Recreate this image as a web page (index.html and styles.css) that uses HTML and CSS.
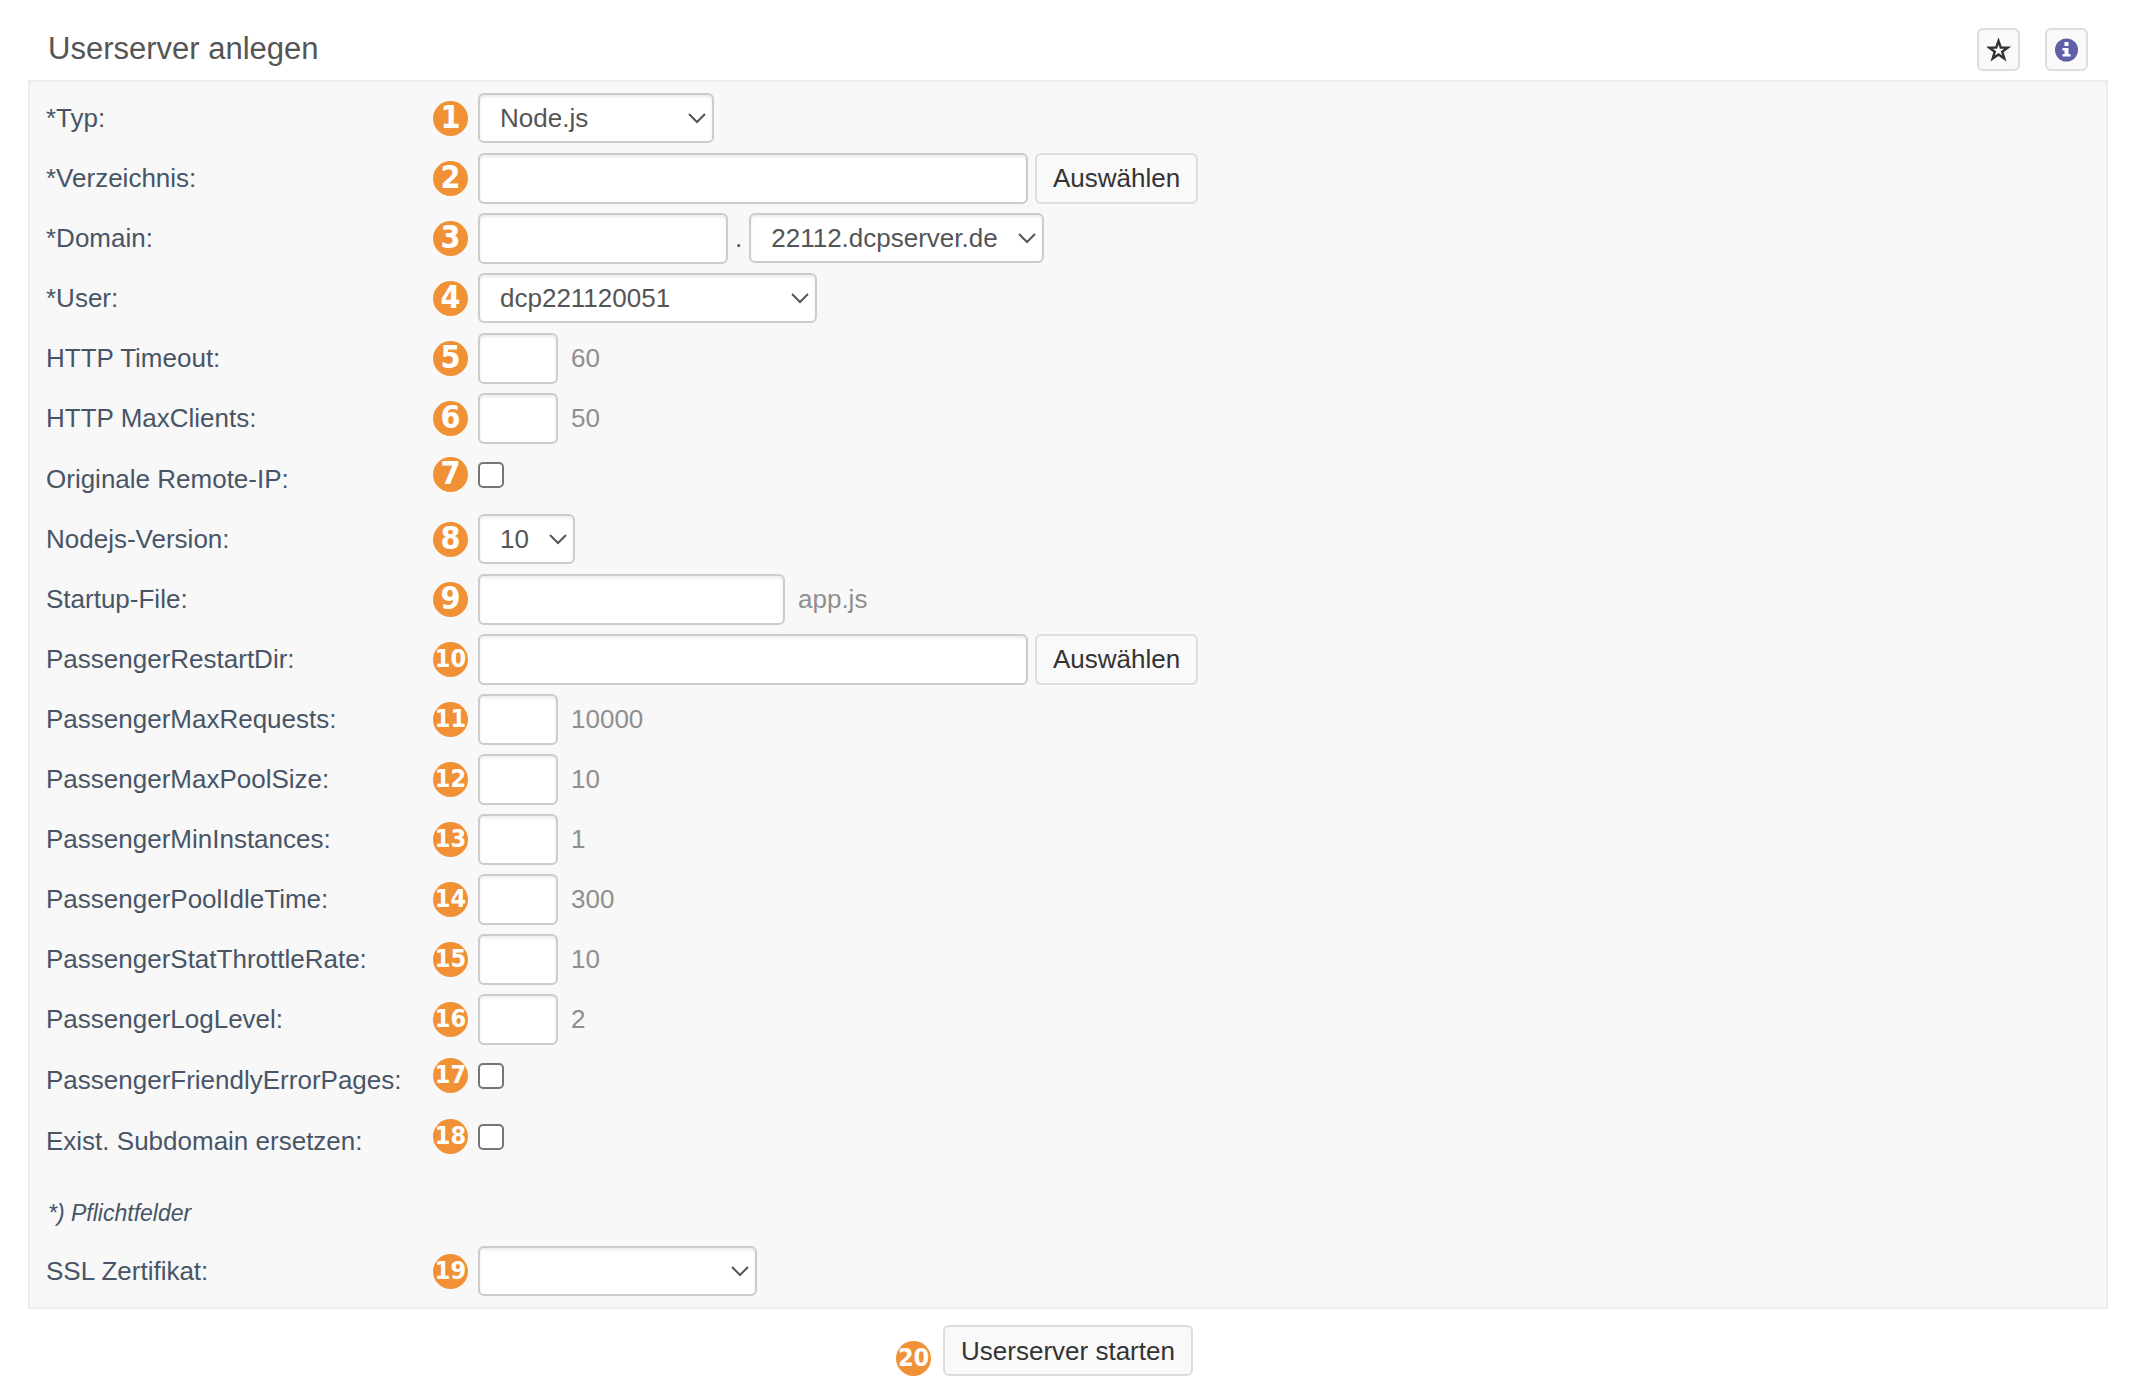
FILE: index.html
```html
<!DOCTYPE html>
<html lang="de">
<head>
  <meta charset="UTF-8">
  <meta name="viewport" content="width=device-width, initial-scale=1.0">
  <title>Userserver anlegen</title>

  <link rel="stylesheet" href="styles.css">
</head>
<body>

  <header class="header">
    <h1 class="title">Userserver anlegen</h1>

    <div class="actions">
      <button type="button" class="icon-button" aria-label="Favorit">
        <svg width="24" height="24" viewBox="0 0 24 24">
          <path d="M11.500 3l2.300 6.600h6.900l-5.500 4.100 2.100 6.800-5.800-4.100-5.800 4.100 2.100-6.800L2.300 9.600h6.900z" fill="none" stroke="#333" stroke-width="2.400"/>
        </svg>
      </button>
      <button type="button" class="icon-button" aria-label="Info">
        <svg width="24" height="24" viewBox="0 0 24 24">
          <circle cx="11.500" cy="12" r="11.500" fill="#5f5ea8"/>
          <path d="M9.500 4h4v4h-4zM7.500 10h6v6h2v2.500h-8V16h2v-3.500h-2z" fill="#fff"/>
        </svg>
      </button>
    </div>
  </header>

  <form id="userserver" class="panel">
    <div class="row">
      <label for="typ">*Typ:</label>
      <span class="badge">1</span>
      <div class="field">
        <select id="typ" class="w-typ"><option>Node.js</option></select>
      </div>
    </div>

    <div class="row">
      <label for="verzeichnis">*Verzeichnis:</label>
      <span class="badge">2</span>
      <div class="field">
        <input type="text" id="verzeichnis" class="w-path">
        <button type="button" class="button">Auswählen</button>
      </div>
    </div>

    <div class="row">
      <label for="domain">*Domain:</label>
      <span class="badge">3</span>
      <div class="field">
        <input type="text" id="domain" class="w-domain">
        <span>.</span>
        <select class="w-host" aria-label="Domain Endung"><option>22112.dcpserver.de</option></select>
      </div>
    </div>

    <div class="row">
      <label for="user">*User:</label>
      <span class="badge">4</span>
      <div class="field">
        <select id="user" class="w-user"><option>dcp221120051</option></select>
      </div>
    </div>

    <div class="row">
      <label for="timeout">HTTP Timeout:</label>
      <span class="badge">5</span>
      <div class="field">
        <input type="text" id="timeout" class="w-number">
        <span class="hint">60</span>
      </div>
    </div>

    <div class="row">
      <label for="maxclients">HTTP MaxClients:</label>
      <span class="badge">6</span>
      <div class="field">
        <input type="text" id="maxclients" class="w-number">
        <span class="hint">50</span>
      </div>
    </div>

    <div class="row row-check">
      <label for="remoteip">Originale Remote-IP:</label>
      <span class="badge">7</span>
      <div class="field">
        <input type="checkbox" id="remoteip" class="check">
      </div>
    </div>

    <div class="row">
      <label for="version">Nodejs-Version:</label>
      <span class="badge">8</span>
      <div class="field">
        <select id="version" class="w-version"><option>10</option></select>
      </div>
    </div>

    <div class="row">
      <label for="startup">Startup-File:</label>
      <span class="badge">9</span>
      <div class="field">
        <input type="text" id="startup" class="w-file">
        <span class="hint">app.js</span>
      </div>
    </div>

    <div class="row">
      <label for="restartdir">PassengerRestartDir:</label>
      <span class="badge badge-small">10</span>
      <div class="field">
        <input type="text" id="restartdir" class="w-path">
        <button type="button" class="button">Auswählen</button>
      </div>
    </div>

    <div class="row">
      <label for="maxrequests">PassengerMaxRequests:</label>
      <span class="badge badge-small">11</span>
      <div class="field">
        <input type="text" id="maxrequests" class="w-number">
        <span class="hint">10000</span>
      </div>
    </div>

    <div class="row">
      <label for="poolsize">PassengerMaxPoolSize:</label>
      <span class="badge badge-small">12</span>
      <div class="field">
        <input type="text" id="poolsize" class="w-number">
        <span class="hint">10</span>
      </div>
    </div>

    <div class="row">
      <label for="mininstances">PassengerMinInstances:</label>
      <span class="badge badge-small">13</span>
      <div class="field">
        <input type="text" id="mininstances" class="w-number">
        <span class="hint">1</span>
      </div>
    </div>

    <div class="row">
      <label for="idletime">PassengerPoolIdleTime:</label>
      <span class="badge badge-small">14</span>
      <div class="field">
        <input type="text" id="idletime" class="w-number">
        <span class="hint">300</span>
      </div>
    </div>

    <div class="row">
      <label for="throttle">PassengerStatThrottleRate:</label>
      <span class="badge badge-small">15</span>
      <div class="field">
        <input type="text" id="throttle" class="w-number">
        <span class="hint">10</span>
      </div>
    </div>

    <div class="row">
      <label for="loglevel">PassengerLogLevel:</label>
      <span class="badge badge-small">16</span>
      <div class="field">
        <input type="text" id="loglevel" class="w-number">
        <span class="hint">2</span>
      </div>
    </div>

    <div class="row row-check">
      <label for="errorpages">PassengerFriendlyErrorPages:</label>
      <span class="badge badge-small">17</span>
      <div class="field">
        <input type="checkbox" id="errorpages" class="check">
      </div>
    </div>

    <div class="row row-check">
      <label for="ersetzen">Exist. Subdomain ersetzen:</label>
      <span class="badge badge-small">18</span>
      <div class="field">
        <input type="checkbox" id="ersetzen" class="check">
      </div>
    </div>

    <p class="note">*) Pflichtfelder</p>

    <div class="row">
      <label for="ssl">SSL Zertifikat:</label>
      <span class="badge badge-small">19</span>
      <div class="field">
        <select id="ssl" class="w-ssl"><option></option></select>
      </div>
    </div>
  </form>

  <footer class="footer">
    <span class="badge badge-small">20</span>
    <button type="submit" form="userserver" class="button">Userserver starten</button>
  </footer>

</body>
</html>
```
FILE: styles.css
```css
* {
  margin: 0;
  padding: 0;

  box-sizing: border-box;
}

body {
  padding: 28px 36px 16px 28px;

  background: #fff;
  color: #555;

  font-family: 'Liberation Sans', Arial, sans-serif;
  font-size: 26px;
  line-height: 30px;
}

input,
select,
button {
  font: inherit;
}

.header {
  display: flex;
  align-items: flex-start;
  justify-content: space-between;

  height: 52px;
  padding: 0 20px;
}

.title {
  font-size: 31px;
  font-weight: 400;
  line-height: 42px;
}

.actions {
  display: flex;
  gap: 25px;
}

.icon-button {
  display: flex;
  align-items: center;
  justify-content: center;

  width: 43px;
  height: 43px;

  background: #f9f9f9;
  border: 2px solid #ddd;
  border-radius: 6px;
}

.panel {
  padding: 6px 16px;

  background: #f8f8f8;
  border: 2px solid #ededed;
}

.row {
  display: grid;
  grid-template-columns: 387px 45px 1fr;
  align-items: center;

  height: 60px;

  color: #475566;
}

.row-check {
  height: 61px;
}

/* Checkboxes sit a bit above the label line */
.row-check .badge,
.row-check .field {
  margin-bottom: 8px;
}

.field {
  display: flex;
  align-items: center;
  gap: 7px;

  color: #555;
}

.badge {
  width: 35px;
  height: 35px;

  background: #f19135;
  border-radius: 50%;
  color: #fff;

  font-family: 'DejaVu Sans Condensed', 'DejaVu Sans', sans-serif;
  font-size: 32px;
  font-weight: 700;
  line-height: 33px;
  text-align: center;
}

.badge-small {
  display: flex;
  justify-content: center;

  font-size: 25px;
}

input[type="text"],
select {
  height: 51px;

  background-color: #fff;
  border: 2px solid #ccc;
  border-radius: 6px;
  box-shadow: inset 0 2px 3px rgba(0, 0, 0, 0.08);
  color: #555;
}

input[type="text"] {
  padding: 0 10px;
}

select {
  height: 50px;
  padding: 0 30px 0 20px;

  appearance: none;
  background-image: url("data:image/svg+xml,%3Csvg xmlns='http://www.w3.org/2000/svg' width='18' height='11'%3E%3Cpath d='M1 1l8 8 8-8' fill='none' stroke='%23555' stroke-width='2'/%3E%3C/svg%3E");
  background-repeat: no-repeat;
  background-position: right 6px center;
}

.check {
  width: 26px;
  height: 26px;

  appearance: none;
  background: #fff;
  border: 2px solid #767676;
  border-radius: 5px;
}

.w-typ { width: 236px; }
.w-path { width: 550px; }
.w-domain { width: 250px; }
.w-host { width: 295px; }
.w-user { width: 339px; }
.w-number { width: 80px; }
.w-version { width: 97px; }
.w-file { width: 307px; }
.w-ssl { width: 279px; }

.hint {
  padding-left: 6px;

  color: #8f8f8f;
}

.button {
  height: 51px;
  padding: 0 16px;

  background: #f9f9f9;
  border: 2px solid #ddd;
  border-radius: 6px;
  color: #333;

  white-space: nowrap;
}

.note {
  padding: 28px 2px 14px;

  color: #475566;

  font-size: 23px;
  font-style: italic;
  line-height: 28px;
}

.footer {
  display: grid;
  grid-template-columns: 1fr auto 1fr;
  align-items: end;
  gap: 12px;

  margin-top: 16px;
}

.footer .badge {
  justify-self: end;
}
```
